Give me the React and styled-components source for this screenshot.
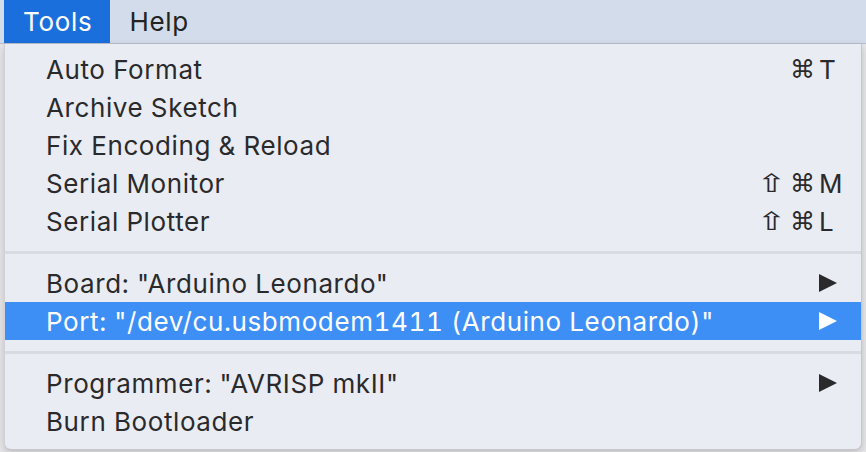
import React from "react";
import styled, { createGlobalStyle } from "styled-components";

const Global = createGlobalStyle`
  html, body { margin: 0; padding: 0; }
  body {
    width: 866px;
    height: 452px;
    overflow: hidden;
    background: #e7e7ea;
    font-family: "Inter", "DejaVu Sans", sans-serif;
  }
`;

const Page = styled.div`
  display: flex;
  flex-direction: column;
  width: 866px;
  height: 452px;
`;

const MenuBar = styled.div`
  display: flex;
  align-items: stretch;
  height: 44px;
  padding-left: 4px;
  background: #d2dcea;
  border-bottom: 1px solid #b9c0cc;
  box-sizing: border-box;
  flex-shrink: 0;
`;

const BarItem = styled.div`
  display: flex;
  align-items: center;
  padding: 0 18px 1px 19px;
  font-size: 26px;
  letter-spacing: 0.7px;
  color: ${(p) => (p.$active ? "#ffffff" : "#232323")};
  background: ${(p) => (p.$active ? "#1b6fdc" : "transparent")};
`;

const Stage = styled.div`
  display: flex;
  flex: 1;
  align-items: flex-start;
  padding-left: 4px;
`;

const Menu = styled.div`
  display: flex;
  flex-direction: column;
  width: 858px;
  padding: 6px 0 9px;
  box-sizing: border-box;
  background: #e9ecf3;
  border-radius: 0 0 7px 7px;
  border-right: 1px solid #c4c6cc;
  border-bottom: 1px solid #c4c6cc;
  border-left: 1px solid #cfd1d6;
  box-shadow: 0 3px 8px rgba(0, 0, 0, 0.18);
`;

const Row = styled.div`
  display: flex;
  align-items: center;
  height: 38px;
  padding: 0 18px 0 41px;
  font-size: 26px;
  letter-spacing: 0.6px;
  font-variant-numeric: tabular-nums;
  color: ${(p) => (p.$selected ? "#ffffff" : "#2a2a2c")};
  background: ${(p) => (p.$selected ? "#3d8ff5" : "transparent")};
`;

const Label = styled.span`
  flex: 1;
  white-space: nowrap;
`;

const Mods = styled.span`
  display: flex;
  align-items: center;
  gap: 4px;
  margin-right: 4px;
  font-family: "DejaVu Sans", sans-serif;
  font-size: 25px;
  letter-spacing: 0;
`;

const Shift = styled.span`
  display: inline-block;
  transform: scaleX(1.45);
  margin: 0 4px 0 0;
`;

const Key = styled.span`
  width: 24px;
  text-align: left;
  letter-spacing: 0;
`;

const Arrow = styled.svg`
  width: 18px;
  height: 18px;
  margin-right: 6px;
  fill: currentColor;
`;

const Separator = styled.div`
  height: 24px;
  display: flex;
  align-items: center;
  &::after {
    content: "";
    display: block;
    width: 100%;
    height: 3px;
    background: #d8dbe2;
  }
`;

const Submenu = () => (
  <Arrow viewBox="0 0 18 18">
    <polygon points="0,0 18,9 0,18" />
  </Arrow>
);

const items = [
  { label: "Auto Format", cmd: true, key: "T" },
  { label: "Archive Sketch" },
  { label: "Fix Encoding & Reload" },
  { label: "Serial Monitor", shift: true, cmd: true, key: "M" },
  { label: "Serial Plotter", shift: true, cmd: true, key: "L" },
  { sep: true },
  { label: 'Board: "Arduino Leonardo"', sub: true },
  { label: 'Port: "/dev/cu.usbmodem1411 (Arduino Leonardo)"', sub: true, selected: true },
  { sep: true },
  { label: 'Programmer: "AVRISP mkII"', sub: true },
  { label: "Burn Bootloader" },
];

export default function App() {
  return (
    <>
      <Global />
      <Page>
        <MenuBar>
          <BarItem $active>Tools</BarItem>
          <BarItem>Help</BarItem>
        </MenuBar>
        <Stage>
          <Menu>
            {items.map((it, i) =>
              it.sep ? (
                <Separator key={i} />
              ) : (
                <Row key={i} $selected={it.selected}>
                  <Label>{it.label}</Label>
                  {it.cmd && (
                    <Mods>
                      {it.shift && <Shift>⇧</Shift>}
                      <span>⌘</span>
                    </Mods>
                  )}
                  {it.key && <Key>{it.key}</Key>}
                  {it.sub && <Submenu />}
                </Row>
              )
            )}
          </Menu>
        </Stage>
      </Page>
    </>
  );
}
